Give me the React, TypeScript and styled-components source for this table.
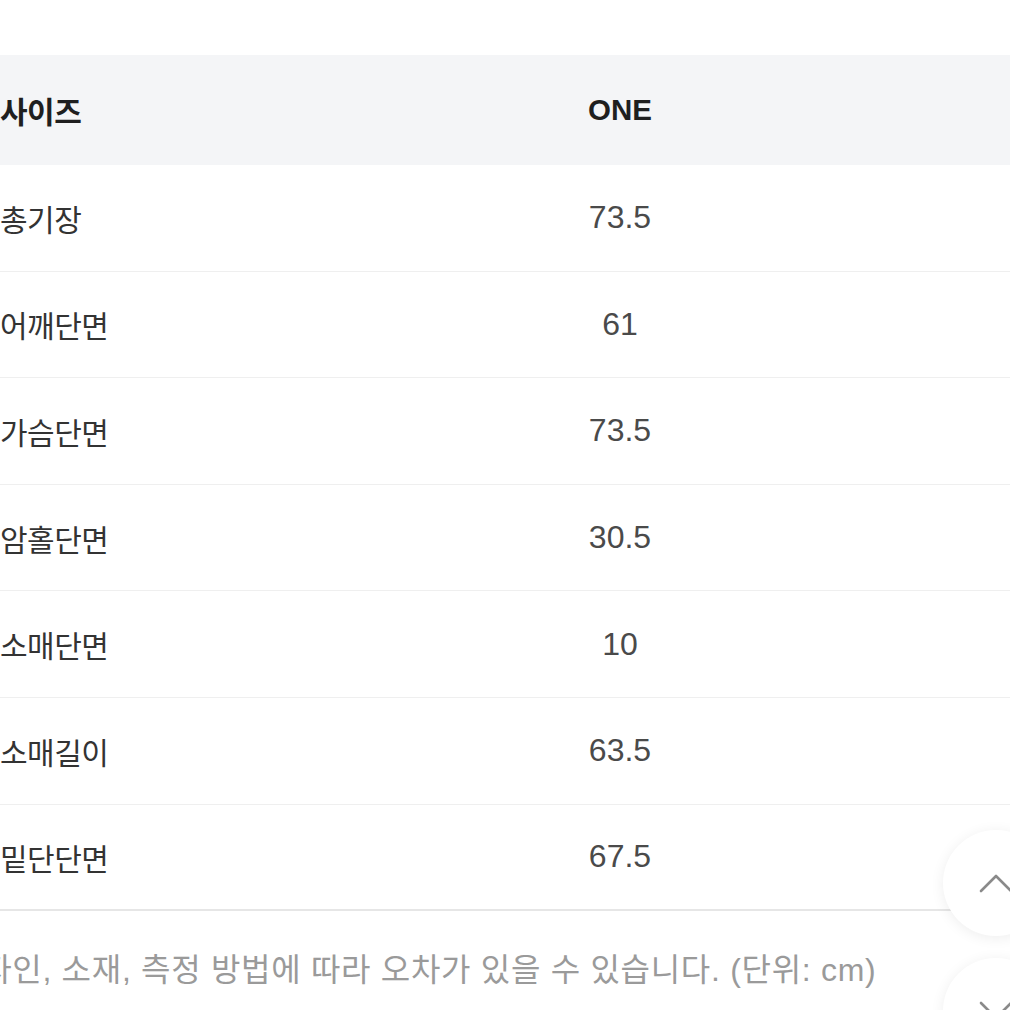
import styled, { createGlobalStyle } from "styled-components";

const GlobalStyle = createGlobalStyle`
  html, body {
    margin: 0;
    padding: 0;
    background: #ffffff;
    overflow: hidden;
  }
  body {
    font-family: "Liberation Sans", "Noto Sans CJK KR", sans-serif;
    -webkit-font-smoothing: antialiased;
  }
`;

const rows = [
  { label: "총기장", value: "73.5" },
  { label: "어깨단면", value: "61" },
  { label: "가슴단면", value: "73.5" },
  { label: "암홀단면", value: "30.5" },
  { label: "소매단면", value: "10" },
  { label: "소매길이", value: "63.5" },
  { label: "밑단단면", value: "67.5" },
];

function App() {
  return (
    <>
      <GlobalStyle />
      <Page>
        <SizeTable>
          <HeadRow>
            <LabelCell $head>사이즈</LabelCell>
            <ValueCell $head>ONE</ValueCell>
            <Filler />
          </HeadRow>
          {rows.map((r, i) => (
            <BodyRow key={r.label} $last={i === rows.length - 1}>
              <LabelCell>{r.label}</LabelCell>
              <ValueCell>{r.value}</ValueCell>
              <Filler />
            </BodyRow>
          ))}
        </SizeTable>
        <Note>디자인, 소재, 측정 방법에 따라 오차가 있을 수 있습니다. (단위: cm)</Note>
      </Page>

      <FloatButton $top={830} aria-label="맨 위로">
        <svg width="34" height="20" viewBox="0 0 34 20" fill="none">
          <path d="M2 18 L17 3 L32 18" stroke="#8a8a8a" strokeWidth="2.6" strokeLinecap="round" strokeLinejoin="round" />
        </svg>
      </FloatButton>
      <FloatButton $top={958} aria-label="맨 아래로">
        <svg width="34" height="20" viewBox="0 0 34 20" fill="none">
          <path d="M2 2 L17 17 L32 2" stroke="#8a8a8a" strokeWidth="2.6" strokeLinecap="round" strokeLinejoin="round" />
        </svg>
      </FloatButton>
    </>
  );
}

export default App;

const Page = styled.div`
  margin-left: -48px;
  width: 1100px;
  padding-top: 55px;
`;

const SizeTable = styled.div`
  display: flex;
  flex-direction: column;
`;

const HeadRow = styled.div`
  display: grid;
  grid-template-columns: 400px 536px 1fr;
  align-items: center;
  height: 110px;
  background: #f4f5f7;
`;

const BodyRow = styled.div<{ $last?: boolean }>`
  display: grid;
  grid-template-columns: 400px 536px 1fr;
  align-items: center;
  box-sizing: border-box;
  height: 106.6px;
  border-bottom: ${(p) => (p.$last ? "2px solid #e6e6e6" : "1.5px solid #efefef")};
`;

const LabelCell = styled.div<{ $head?: boolean }>`
  padding-left: 48px;
  font-size: 30px;
  font-weight: ${(p) => (p.$head ? 700 : 400)};
  color: ${(p) => (p.$head ? "#1f1f1f" : "#333333")};
  letter-spacing: -0.5px;
`;

const ValueCell = styled.div<{ $head?: boolean }>`
  text-align: center;
  font-size: ${(p) => (p.$head ? "29.5px" : "32px")};
  font-weight: ${(p) => (p.$head ? 700 : 400)};
  color: ${(p) => (p.$head ? "#1f1f1f" : "#4a4a4a")};
`;

const Filler = styled.div``;

const Note = styled.p`
  margin: 0;
  padding-top: 39px;
  font-size: 32px;
  line-height: 40px;
  color: #9a9a9a;
  letter-spacing: 0.7px;
  white-space: nowrap;
`;

const FloatButton = styled.button<{ $top: number }>`
  position: fixed;
  top: ${(p) => p.$top}px;
  left: 943px;
  width: 106px;
  height: 106px;
  border-radius: 50%;
  border: none;
  background: #ffffff;
  box-shadow: 0 2px 14px rgba(0, 0, 0, 0.07);
  display: flex;
  align-items: center;
  justify-content: center;
  padding: 0;
  cursor: pointer;
`;
